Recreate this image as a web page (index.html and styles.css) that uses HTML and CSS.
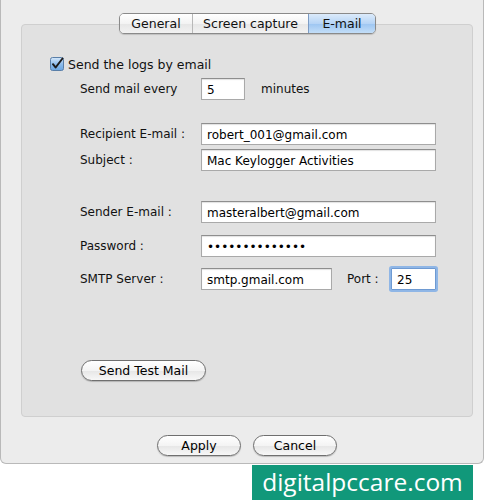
FILE: index.html
```html
<!DOCTYPE html>
<html lang="en">
<head>
    <meta charset="UTF-8">
    <meta name="viewport" content="width=device-width, initial-scale=1.0">
    <title>E-mail Settings</title>
    <link rel="stylesheet" href="styles.css">
</head>
<body>
    <div class="window">
        <div class="tabs">
            <div class="tab general">General</div>
            <div class="tab capture">Screen capture</div>
            <div class="tab email active">E-mail</div>
        </div>

        <div class="panel">
            <label class="check-row">
                <svg class="checkbox" width="14" height="14" viewBox="0 0 14 14">
                    <defs>
                        <linearGradient id="cb" x1="0" y1="0" x2="0" y2="1">
                            <stop offset="0" stop-color="#d6e8fa"/>
                            <stop offset="0.5" stop-color="#8fbdec"/>
                            <stop offset="1" stop-color="#6aa6e2"/>
                        </linearGradient>
                    </defs>
                    <rect x="0.5" y="0.5" width="13" height="13" rx="2" fill="url(#cb)" stroke="#5a7fa8"/>
                    <path d="M3 7.2 L5.6 10.5 L12.5 1.5" fill="none" stroke="#1b1b1b" stroke-width="2" stroke-linecap="round" stroke-linejoin="round"/>
                </svg>
                <span>Send the logs by email</span>
            </label>

            <div class="row every">
                <span class="label">Send mail every</span>
                <input class="field small" type="text" value="5">
                <span class="unit">minutes</span>
            </div>

            <div class="row recipient">
                <span class="label">Recipient E-mail :</span>
                <input class="field wide" type="text" value="robert_001@gmail.com">
            </div>
            <div class="row subject">
                <span class="label">Subject :</span>
                <input class="field wide" type="text" value="Mac Keylogger Activities">
            </div>

            <div class="row sender">
                <span class="label">Sender E-mail :</span>
                <input class="field wide" type="text" value="masteralbert@gmail.com">
            </div>
            <div class="row password">
                <span class="label">Password :</span>
                <input class="field wide dots" type="text" value="••••••••••••••">
            </div>
            <div class="row smtp">
                <span class="label">SMTP Server :</span>
                <input class="field server" type="text" value="smtp.gmail.com">
                <span class="port-label">Port :</span>
                <input class="field port focused" type="text" value="25">
            </div>

            <button class="pill test">Send Test Mail</button>
        </div>

        <div class="actions">
            <button class="pill action">Apply</button>
            <button class="pill action">Cancel</button>
        </div>
    </div>

    <div class="brand">digitalpccare.com</div>
</body>
</html>
```

FILE: styles.css
```css
body {
    margin: 0;
    background-color: #fff;
    font-family: 'DejaVu Sans', sans-serif;
    font-size: 12px;
    color: #111;
}

.window {
    width: 484px;
    height: 464px;
    box-sizing: border-box;
    background-color: #ececec;
    border: 1px solid #b9b9b9;
    border-top: none;
    border-radius: 0 0 6px 6px;
    padding-top: 13px;
}

/* segmented tab control sitting on the panel's top edge */
.tabs {
    position: relative;
    z-index: 1;
    display: flex;
    width: max-content;
    margin: 0 0 0 118px;
    border: 1px solid #8a8a8a;
    border-radius: 5px;
    overflow: hidden;
    box-shadow: 0 1px 1px rgba(0, 0, 0, 0.15);
}

.tab {
    height: 19px;
    line-height: 19px;
    text-align: center;
    font-size: 12.5px;
    background: linear-gradient(#ffffff, #f3f3f3 50%, #e6e6e6 51%, #f2f2f2);
    border-left: 1px solid #b8b8b8;
}

.tab.general { width: 72px; border-left: none; }
.tab.capture { width: 115px; }
.tab.email { width: 66px; }

.tab.active {
    background: linear-gradient(#dcebfb, #b6d4f6 50%, #9cc5f2 51%, #c3def8);
    border-left-color: #7d9cc4;
}

.panel {
    margin: -10px 10px 0 20px;
    height: 393px;
    box-sizing: border-box;
    background-color: #e1e1e1;
    border: 1px solid #cfcfcf;
    border-radius: 4px;
    padding: 31px 0 0 28px;
}

.check-row {
    display: flex;
    align-items: center;
    gap: 4px;
    height: 16px;
    font-size: 12.5px;
}

.row {
    display: flex;
    align-items: center;
    height: 22px;
    padding-left: 30px;
}

.label {
    width: 121px;
}

.field {
    height: 22px;
    box-sizing: border-box;
    border: 1px solid #a9a9a9;
    border-top-color: #8e8e8e;
    background-color: #fff;
    font-family: 'DejaVu Sans', sans-serif;
    font-size: 12px;
    color: #000;
    padding: 2px 0 0 5px;
    box-shadow: inset 0 1px 1px rgba(0, 0, 0, 0.12);
    outline: none;
}

.field.small { width: 44px; }
.field.wide { width: 235px; }
.field.server { width: 131px; }
.field.port { width: 45px; }

.field.dots {
    font-size: 12px;
}

.field.focused {
    border-color: #6e9ad2;
    box-shadow: 0 0 0 2px #8fb6e6;
    border-radius: 1px;
}

.unit {
    margin-left: 16px;
}

.port-label {
    margin: 0 0 0 15px;
    width: 44px;
}

.every { margin-top: 6px; }
.recipient { margin-top: 23px; }
.subject { margin-top: 4px; }
.sender { margin-top: 30px; }
.password { margin-top: 12px; }
.smtp { margin-top: 11px; }

.pill {
    height: 21px;
    box-sizing: border-box;
    border: 1px solid #6f6f6f;
    border-radius: 11px;
    background: linear-gradient(#ffffff, #f4f4f4 50%, #e6e6e6 51%, #f7f7f7);
    font-family: 'DejaVu Sans', sans-serif;
    font-size: 12.5px;
    color: #000;
    padding: 0;
    box-shadow: 0 1px 1px rgba(0, 0, 0, 0.2);
}

.test {
    display: block;
    width: 125px;
    margin: 70px 0 0 31px;
}

.actions {
    display: flex;
    justify-content: center;
    gap: 12px;
    margin-top: 18px;
    padding-left: 10px;
}

.action {
    width: 84px;
}

.brand {
    width: 221px;
    height: 35px;
    margin: 1px 0 0 252px;
    background-color: #11987a;
    color: #fff;
    font-family: 'Open Sans', sans-serif;
    font-size: 24.5px;
    line-height: 33px;
    text-align: center;
}
```
